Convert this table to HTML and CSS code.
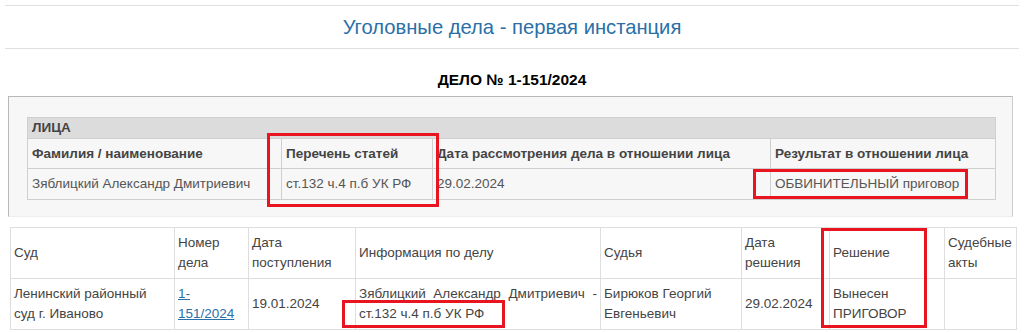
FILE: index.html
```html
<!DOCTYPE html>
<html lang="ru">
<head>
<meta charset="utf-8">
<title>Уголовные дела - первая инстанция</title>
<link rel="stylesheet" href="styles.css">
</head>
<body>
<div class="page">
  <div class="title-bar">Уголовные дела - первая инстанция</div>
  <h3 class="case-no">ДЕЛО № 1-151/2024</h3>

  <div class="box">
    <table class="persons">
      <colgroup>
        <col class="p1"><col class="p2"><col class="p3"><col class="p4">
      </colgroup>
      <tr class="section"><th colspan="4">ЛИЦА</th></tr>
      <tr class="head">
        <th>Фамилия / наименование</th>
        <th>Перечень статей</th>
        <th>Дата рассмотрения дела в отношении лица</th>
        <th>Результат в отношении лица</th>
      </tr>
      <tr class="data">
        <td>Зяблицкий Александр Дмитриевич</td>
        <td>ст.132 ч.4 п.б УК РФ</td>
        <td>29.02.2024</td>
        <td>ОБВИНИТЕЛЬНЫЙ приговор</td>
      </tr>
    </table>
  </div>

  <table class="cases">
    <colgroup>
      <col class="c1"><col class="c2"><col class="c3"><col class="c4">
      <col class="c5"><col class="c6"><col class="c7"><col class="c8">
    </colgroup>
    <tr class="head">
      <td>Суд</td>
      <td>Номер дела</td>
      <td>Дата поступления</td>
      <td>Информация по делу</td>
      <td>Судья</td>
      <td>Дата решения</td>
      <td>Решение</td>
      <td>Судебные акты</td>
    </tr>
    <tr class="data">
      <td>Ленинский районный суд г. Иваново</td>
      <td><a href="#">1-151/2024</a></td>
      <td>19.01.2024</td>
      <td class="info">Зяблицкий Александр Дмитриевич - ст.132 ч.4 п.б УК РФ</td>
      <td>Бирюков Георгий Евгеньевич</td>
      <td>29.02.2024</td>
      <td>Вынесен ПРИГОВОР</td>
      <td></td>
    </tr>
  </table>

  <div class="mark m1"></div>
  <div class="mark m2"></div>
  <div class="mark m3"></div>
  <div class="mark m4"></div>
</div>
</body>
</html>
```

FILE: styles.css
```css
html, body {
  margin: 0;
  padding: 0;
  background: #ffffff;
}

body {
  font-family: "Liberation Sans", Arial, sans-serif;
  color: #333;
}

.page {
  position: relative;
  width: 1024px;
  height: 333px;
  overflow: hidden;
}

.title-bar {
  margin: 5px 5px 0 5px;
  border-top: 1px solid #e0e0e0;
  border-bottom: 1px solid #e0e0e0;
  height: 42px;
  line-height: 42px;
  text-align: center;
  font-size: 20.2px;
  color: #2a6fa8;
}

.case-no {
  margin: 22px 0 8px 0;
  line-height: 17px;
  font-size: 15.5px;
  font-weight: bold;
  color: #000;
  text-align: center;
}

.box {
  margin-left: 8px;
  width: 968px;
  padding: 20px 17px 16px 18px;
  background: #f7f7f7;
  border: 1px solid #b8b8b8;
  border-bottom-color: #eeeeee;
  border-right-color: #cccccc;
}

table {
  border-collapse: collapse;
  table-layout: fixed;
}

.persons {
  width: 968px;
  font-size: 13.5px;
  color: #555;
}

.persons th,
.persons td {
  border: 1px solid #cfcfcf;
  text-align: left;
  vertical-align: middle;
  padding: 5px 4px;
  line-height: 19px;
}

.persons th {
  font-weight: bold;
  color: #444;
}

.persons .section th {
  background: #dcdcdc;
  padding: 0 4px;
  line-height: 20px;
}

.persons .data td {
  padding: 5px 4px 6px 4px;
}

.p1 { width: 254px; }
.p2 { width: 151px; }
.p3 { width: 338px; }
.p4 { width: 225px; }

.cases {
  margin: 10px 0 0 10px;
  width: 1006px;
  font-size: 13.5px;
  color: #444;
}

.cases td {
  border: 1px solid #dedede;
  padding: 5px 3px 5px 3px;
  line-height: 20px;
  vertical-align: middle;
  text-align: left;
}

.cases .info {
  text-align: justify;
}

.cases a {
  color: #2a6fa8;
  text-decoration: underline;
}

.c1 { width: 164px; }
.c2 { width: 74px; }
.c3 { width: 107px; }
.c4 { width: 245px; }
.c5 { width: 141px; }
.c6 { width: 88px; }
.c7 { width: 115px; }
.c8 { width: 72px; }

.mark {
  position: absolute;
  border: 3px solid #e8141f;
  box-sizing: border-box;
}

.m1 { left: 267px; top: 133px; width: 172px; height: 74px; }
.m2 { left: 753px; top: 169px; width: 215px; height: 30px; }
.m3 { left: 342px; top: 300px; width: 163px; height: 28px; }
.m4 { left: 821px; top: 228px; width: 106px; height: 100px; }
```
